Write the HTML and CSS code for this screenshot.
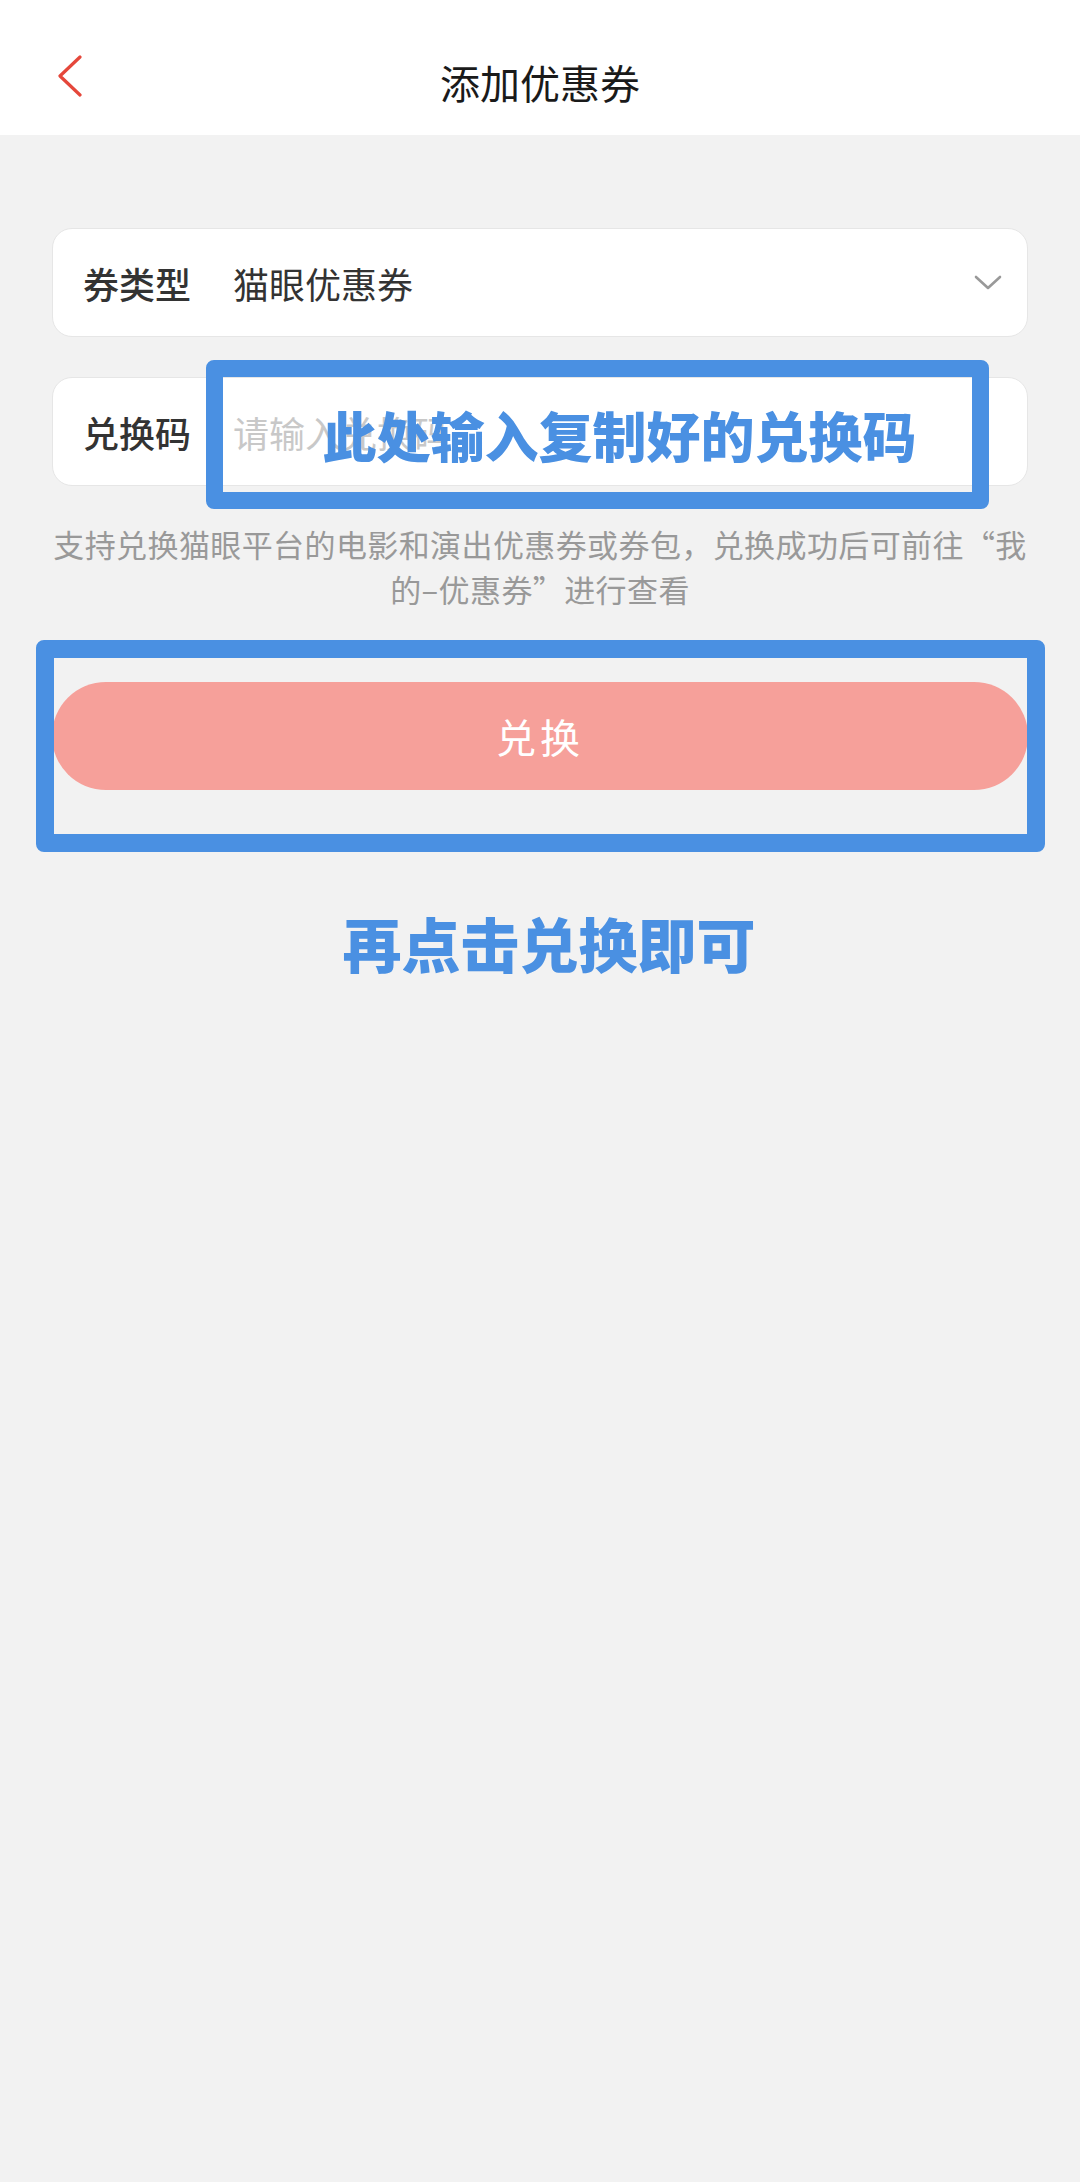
FILE: index.html
```html
<!DOCTYPE html>
<html lang="zh-CN">
<head>
  <meta charset="UTF-8">
  <title>添加优惠券</title>
  <link rel="stylesheet" href="styles.css">
</head>
<body>
<div class="nav">
  <a class="back">
    <svg width="26" height="44" viewBox="0 0 26 44">
      <path d="M23 2 L3 21 L23 40" fill="none" stroke="#e5473b" stroke-width="3.2" stroke-linecap="round" stroke-linejoin="round"/>
    </svg>
  </a>
  <div class="title">添加优惠券</div>
  <div></div>
</div>

<div class="content">
  <div class="field">
    <span class="label">券类型</span>
    <span class="value">猫眼优惠券</span>
    <svg class="arrow" width="28" height="16" viewBox="0 0 28 16">
      <path d="M2 2 L14 13 L26 2" fill="none" stroke="#999" stroke-width="2.6" stroke-linecap="round" stroke-linejoin="round"/>
    </svg>
  </div>

  <div class="field field-code">
    <span class="label">兑换码</span>
    <span class="placeholder">请输入兑换码</span>
    <div class="mark mark-code">此处输入复制好的兑换码</div>
  </div>

  <p class="tips">支持兑换猫眼平台的电影和演出优惠券或券包，兑换成功后可前往“我的–优惠券”进行查看</p>

  <div class="btn-wrap">
    <button class="btn" type="button">兑换</button>
    <div class="mark mark-btn"></div>
  </div>

  <div class="note">再点击兑换即可</div>
</div>
</body>
</html>
```

FILE: styles.css
```css
body {
  margin: 0;
  background: #f2f2f2;
  font-family: "Noto Sans CJK SC", "Noto Sans", sans-serif;
  color: #333;
  min-height: 2182px;
}

.nav {
  display: grid;
  grid-template-columns: 1fr auto 1fr;
  align-items: center;
  height: 106px;
  padding-top: 29px;
  background: #fff;
}

.nav .back {
  display: flex;
  padding-left: 57px;
  margin-top: -10px;
}

.nav .title {
  font-size: 40px;
  color: #1a1a1a;
  line-height: 1;
}

.content {
  padding: 93px 52px 0;
}

.field {
  display: flex;
  align-items: center;
  height: 107px;
  padding: 0 25px 0 30px;
  background: #fff;
  border: 1px solid #e6e6e6;
  border-radius: 20px;
  font-size: 36px;
}

.field .label {
  font-weight: 500;
  color: #333;
  width: 150px;
}

.field .value {
  color: #333;
}

.field .placeholder {
  color: #c8c8c8;
}

.field .arrow {
  margin-left: auto;
}

.field-code {
  position: relative;
  margin-top: 40px;
}

.mark {
  position: absolute;
  box-sizing: border-box;
  border: 17px solid #4a90e2;
  border-radius: 8px;
}

.mark-code {
  left: 153px;
  top: -18px;
  width: 783px;
  height: 149px;
  display: flex;
  align-items: center;
  justify-content: center;
  padding-left: 44px;
  font-size: 54px;
  font-weight: 900;
  color: #4a90e2;
}

.tips {
  margin: 35px 0 0;
  font-size: 31px;
  line-height: 45px;
  letter-spacing: 0.4px;
  color: #999;
  text-align: center;
}

.btn-wrap {
  position: relative;
  margin-top: 71px;
}

.btn {
  display: block;
  width: 100%;
  height: 108px;
  border: 0;
  border-radius: 54px;
  background: #f6a09a;
  color: #fff;
  font-family: inherit;
  font-size: 40px;
  letter-spacing: 4px;
}

.mark-btn {
  left: -16px;
  top: -42px;
  width: 1009px;
  height: 212px;
  border-width: 18px;
}

.note {
  margin-top: 118px;
  padding-left: 18px;
  text-align: center;
  font-size: 59px;
  line-height: 70px;
  font-weight: 900;
  color: #4a90e2;
}
```
